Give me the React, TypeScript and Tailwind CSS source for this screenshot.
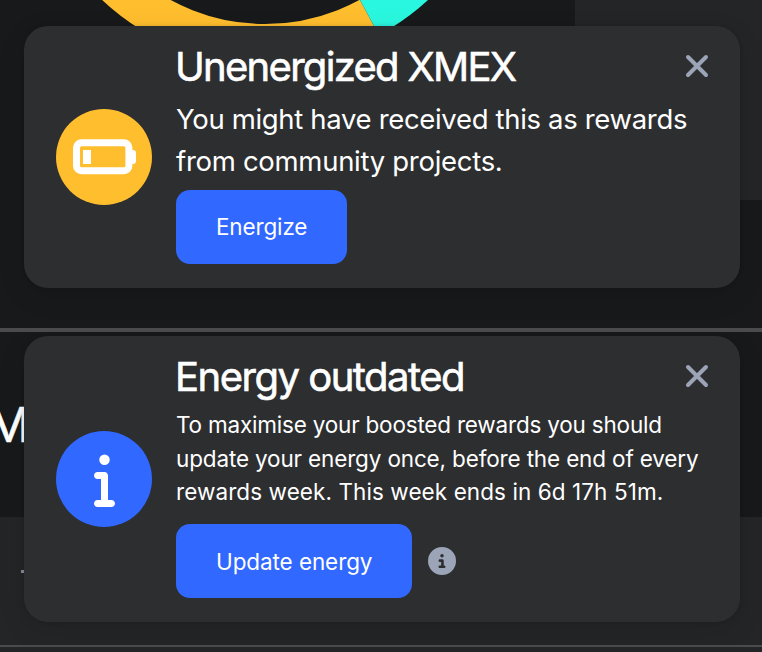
import type { ReactNode } from "react";
import { FaCircleInfo, FaInfo } from "react-icons/fa6";

function CloseIcon() {
  return (
    <svg className="h-6 w-6" viewBox="0 0 24 24" fill="none" stroke="#9ca5b7" strokeWidth="4" strokeLinecap="round">
      <path d="M3 3 21 21M21 3 3 21" />
    </svg>
  );
}

function BatteryLowIcon() {
  return (
    <svg className="h-9 w-16" viewBox="0 0 64 36">
      <rect x="4.5" y="3.8" width="52.4" height="28" rx="5" fill="none" stroke="white" strokeWidth="7" />
      <path d="M60 11h.8a3.2 3.2 0 0 1 3.2 3.2v7.6a3.2 3.2 0 0 1-3.2 3.2H59V11z" fill="white" />
      <rect x="11" y="11" width="8" height="14" fill="white" />
    </svg>
  );
}

interface NoticeProps {
  title: ReactNode;
  icon: ReactNode;
  children: ReactNode;
  className: string;
}

function Notice({ title, icon, children, className }: NoticeProps) {
  return (
    <article className={`z-10 ml-6 flex w-[716px] items-center rounded-3xl bg-[#2d2e30] pl-8 shadow-[0_0_4px_rgba(0,0,0,0.15),0_8px_28px_rgba(0,0,0,0.1)] ${className}`}>
      {icon}
      <div className="ml-6 flex h-full flex-1 flex-col items-start">
        <header className="flex w-full items-start justify-between pt-4 pr-[31px]">
          <h2 className="-ml-px h-[50px] text-[40px] leading-[50px] whitespace-nowrap [-webkit-text-stroke:0.6px_white]">{title}</h2>
          <button className="mt-3" aria-label="Close"><CloseIcon /></button>
        </header>
        {children}
      </div>
    </article>
  );
}

export default function App() {
  return (
    <main className="h-[652px] w-[762px] overflow-hidden bg-[#18191a] font-['Inter','Liberation_Sans',sans-serif] text-white">
      <section className="grid h-[328px] grid-cols-1 grid-rows-1 overflow-hidden">
        <div className="col-start-1 row-start-1 flex items-start justify-between">
          <svg className="h-[30px] w-[575px]" viewBox="0 0 575 30">
            <circle cx="265" cy="-173" r="217.3" fill="none" stroke="#ffbe2e" strokeWidth="40.6" />
            <path d="M360 0 375.6 29 450 29 450 0z" fill="#18191a" />
            <path d="M360 0 375.6 29 391 28 A237.6 237.6 0 0 0 428 0z" fill="#2af7df" />
          </svg>
          <div className="h-[200px] flex-1 bg-[#242527]" />
        </div>
        <Notice
          className="col-start-1 row-start-1 mt-[26px] h-[262px]"
          title={<span className="tracking-[-1.7px]">Unenergized XMEX</span>}
          icon={<div className="flex h-24 w-24 items-center justify-center rounded-full bg-[#ffbe2e]"><BatteryLowIcon /></div>}
        >
          <p className="mt-[6px] text-[27.5px] leading-[42px] whitespace-nowrap">
            <span className="tracking-[-0.33px]">You might have received this as rewards</span><br />
            <span className="tracking-[-0.29px]">from community projects.</span>
          </p>
          <button className="mt-2 flex h-[74px] w-[171px] items-center rounded-[14px] bg-[#3168ff] pb-px pl-10 text-[22.5px]"><span className="tracking-[-0.15px]">Energize</span></button>
        </Notice>
      </section>
      <div className="h-1 bg-[#4b4b4d]" />
      <section className="grid h-[320px] grid-cols-1 grid-rows-1 overflow-hidden">
        <div className="col-start-1 row-start-1 flex flex-col">
          <div className="h-[185px] pt-[63px]">
            <div className="-ml-[13px] text-[48px] leading-[60px] [-webkit-text-stroke:0.6px_white]">M</div>
          </div>
          <div className="h-[128px] bg-[#242527] pt-[53px] pl-[21px]">
            <div className="h-[3px] w-4 bg-[#858c99]" />
          </div>
          <div className="h-[2px] bg-[#4b4b4d]" />
          <div className="flex-1 bg-[#242527]" />
        </div>
        <Notice
          className="col-start-1 row-start-1 mt-1 h-[286px]"
          title={<span className="tracking-[-1.5px]">Energy outdated</span>}
          icon={<div className="flex h-24 w-24 items-center justify-center rounded-full bg-[#3168ff]"><FaInfo className="ml-px h-14 w-[21px]" /></div>}
        >
          <p className="mt-[6.4px] text-[22.5px] leading-[33.5px] whitespace-nowrap">
            <span className="tracking-[-0.2px]">To maximise your boosted rewards you should</span><br />
            <span className="tracking-[-0.15px]">update your energy once, before the end of every</span><br />
            <span className="tracking-[0.08px]">rewards week. This week ends in 6d 17h 51m.</span>
          </p>
          <div className="mt-[15.1px] flex items-center gap-4">
            <button className="flex h-[74px] w-[236px] items-center rounded-[14px] bg-[#3168ff] pt-px pl-10 text-[22.5px]"><span className="tracking-[-0.09px]">Update energy</span></button>
            <FaCircleInfo className="h-7 w-7 text-[#9ca5b7]" />
          </div>
        </Notice>
      </section>
    </main>
  );
}
